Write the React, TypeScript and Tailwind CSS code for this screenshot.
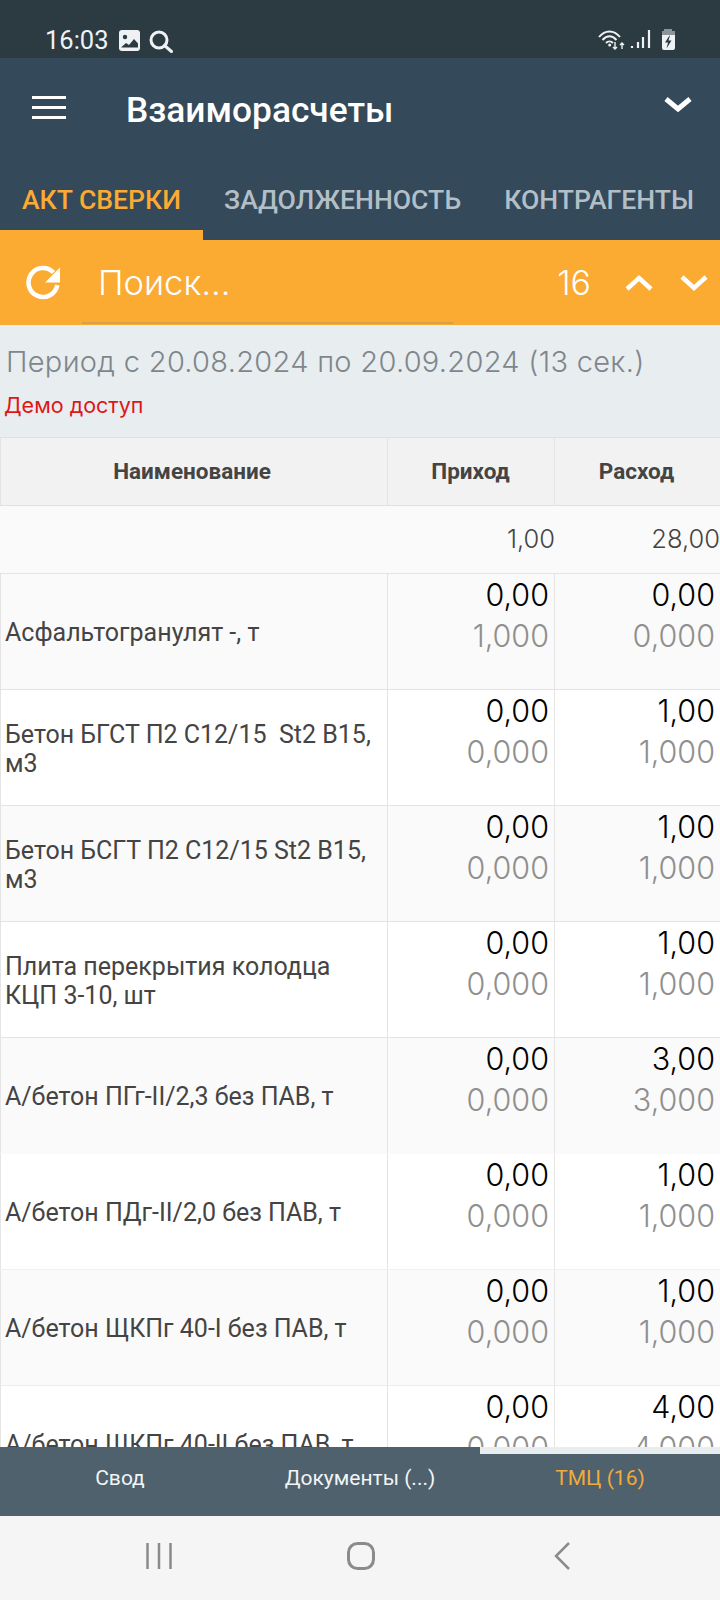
import React from 'react';

interface Row {
  name: string;
  inSum: string;
  inQty: string;
  outSum: string;
  outQty: string;
  border: string;
}

const rows: Row[] = [
  { name: 'Асфальтогранулят -, т', inSum: '0,00', inQty: '1,000', outSum: '0,00', outQty: '0,000', border: 'border-[#e4e4e4]' },
  { name: 'Бетон БГСТ П2 С12/15  St2 В15, м3', inSum: '0,00', inQty: '0,000', outSum: '1,00', outQty: '1,000', border: 'border-[#e4e4e4]' },
  { name: 'Бетон БСГТ П2 С12/15 St2 В15, м3', inSum: '0,00', inQty: '0,000', outSum: '1,00', outQty: '1,000', border: 'border-[#e4e4e4]' },
  { name: 'Плита перекрытия колодца КЦП 3-10, шт', inSum: '0,00', inQty: '0,000', outSum: '1,00', outQty: '1,000', border: 'border-[#e4e4e4]' },
  { name: 'А/бетон ПГг-II/2,3 без ПАВ, т', inSum: '0,00', inQty: '0,000', outSum: '3,00', outQty: '3,000', border: 'border-transparent' },
  { name: 'А/бетон ПДг-II/2,0 без ПАВ, т', inSum: '0,00', inQty: '0,000', outSum: '1,00', outQty: '1,000', border: 'border-[#f1f1f1]' },
  { name: 'А/бетон ЩКПг 40-I без ПАВ, т', inSum: '0,00', inQty: '0,000', outSum: '1,00', outQty: '1,000', border: 'border-[#ececec]' },
  { name: 'А/бетон ЩКПг 40-II без ПАВ, т', inSum: '0,00', inQty: '0,000', outSum: '4,00', outQty: '4,000', border: 'border-[#e4e4e4]' },
];

const numFont = "font-['Inter',sans-serif] font-light";

const StatusBar: React.FC = () => (
  <div className="flex h-[58px] shrink-0 items-end bg-[#2c3a42] pb-[4px] pl-[45px] pr-[42px] text-[#eef2f4]">
    <span className="font-['Roboto',sans-serif] text-[25.5px] leading-[28px]">16:03</span>
    <svg className="mb-[3px] ml-[10px]" width="21" height="21" viewBox="0 0 21 21">
      <rect width="21" height="21" rx="3" fill="#eef2f4" />
      <circle cx="6" cy="7" r="2.200" fill="#2c3a42" />
      <path d="M2 17.500l5-4.500 3 2 5-6 4 4.500v4z" fill="#2c3a42" />
    </svg>
    <svg className="mb-[1px] ml-[9px]" width="24" height="23" viewBox="0 0 24 23" fill="none" stroke="#eef2f4" strokeWidth="3">
      <circle cx="10" cy="10" r="8" />
      <path d="M15.500 15.500l7 6" strokeLinecap="round" />
    </svg>
    <svg className="mb-[3px] ml-auto" width="80" height="24" viewBox="0 -2 80 24" fill="none" stroke="#eef2f4">
      <path d="M1 8c6-7.500 15-7.500 21 0" strokeWidth="2" />
      <path d="M4.500 11c4.500-5 9.500-5 14 0" strokeWidth="2" />
      <path d="M8 14c2-2 5-2 7 0" strokeWidth="2" />
      <circle cx="11.700" cy="16" r="1.500" fill="#eef2f4" stroke="none" />
      <path d="M17 13v7m-2-2 2 2 2-2M24 20v-6m-2 2 2-2 2 2" strokeWidth="1.400" />
      <path d="M34 19v-2M40 19v-6M45 19V8M51 19V1" strokeWidth="2.200" />
      <path d="M66 0h8v2h3v4H64V2h2z" fill="#8a9499" stroke="none" />
      <path d="M64 6h13v13a2 2 0 0 1-2 2h-9a2 2 0 0 1-2-2z" fill="#eef2f4" stroke="none" />
      <path d="M71.500 6.500l-4.500 7h3l-1.500 6 5-8h-3l1.500-5z" fill="#2c3a42" stroke="none" />
    </svg>
  </div>
);

const Header: React.FC = () => (
  <div className="flex h-[182px] shrink-0 flex-col bg-[#34495a]">
    <div className="flex h-[100px] items-center pl-[32px] pr-[28px]">
      <div className="flex w-[34px] flex-col gap-[7px] pb-[2px]">
        <span className="h-[3px] bg-white" />
        <span className="h-[3px] bg-white" />
        <span className="h-[3px] bg-white" />
      </div>
      <span className="ml-[60px] pt-[4px] font-['Roboto',sans-serif] text-[35.3px] font-medium text-white">Взаиморасчеты</span>
      <svg className="mb-[6px] ml-auto" width="28" height="18" viewBox="0 0 28 18" fill="none" stroke="white" strokeWidth="5">
        <path d="M2 3l12 10L26 3" />
      </svg>
    </div>
    <div className="mt-auto flex h-[82px] font-['Roboto',sans-serif] text-[26.6px] font-medium">
      <div className="flex w-[203px] flex-col items-center">
        <span className="flex flex-1 items-center pt-[12px] text-[#fbaa32]">АКТ СВЕРКИ</span>
        <span className="h-[10px] w-full bg-[#fbaa32]" />
      </div>
      <span className="ml-[21px] flex h-[72px] items-center pt-[12px] text-[#b3bfc7]">ЗАДОЛЖЕННОСТЬ</span>
      <span className="ml-[43px] flex h-[72px] items-center pt-[12px] text-[#b3bfc7]">КОНТРАГЕНТЫ</span>
    </div>
  </div>
);

const SearchBar: React.FC = () => (
  <div className="relative flex h-[85px] shrink-0 items-center bg-[#fbaa32] pl-[26px] pr-[12px] text-white">
    <svg width="36" height="36" viewBox="0 0 36 36" fill="none" stroke="white" strokeWidth="4.500">
      <path d="M27.500 7.500A14.500 14.500 0 1 0 31.300 20" />
      <path d="M34 2.500v15H19z" fill="white" stroke="none" />
    </svg>
    <span className={`ml-[36px] text-[34.5px] ${numFont}`}>Поиск...</span>
    <span className={`ml-auto text-[34px] ${numFont}`}>16</span>
    <svg className="ml-[34px]" width="28" height="18" viewBox="0 0 28 18" fill="none" stroke="white" strokeWidth="4.500">
      <path d="M2 15L14 4l12 11" />
    </svg>
    <svg className="ml-[27px]" width="28" height="18" viewBox="0 0 28 18" fill="none" stroke="white" strokeWidth="4.500">
      <path d="M2 3l12 11L26 3" />
    </svg>
    <span className="absolute bottom-[1px] left-[82px] h-[2px] w-[371px] bg-[#d9a04c]" />
  </div>
);

const NumCell: React.FC<{ top: string; bottom: string; withBorder?: boolean }> = ({ top, bottom, withBorder }) => (
  <div className={`flex flex-col items-end pr-[5px] text-[30.5px] leading-[41px] ${numFont} ${withBorder ? 'border-r border-[#e4e4e4]' : ''}`}>
    <span className="text-black">{top}</span>
    <span className="text-[#8f8f8f]">{bottom}</span>
  </div>
);

const Table: React.FC = () => (
  <div className="min-h-0 flex-1 overflow-hidden bg-white">
    <div className="grid h-[69px] grid-cols-[388px_167px_165px] border-y border-[#e0e0e0] bg-[#f2f2f2] font-['Roboto',sans-serif] text-[22.5px] font-bold text-[#444444]">
      <div className="flex items-center justify-center border-x border-[#e4e4e4] pr-[4px]">Наименование</div>
      <div className="flex items-center justify-center border-r border-[#e4e4e4] pr-[1px]">Приход</div>
      <div className="flex items-center justify-center pr-[2px]">Расход</div>
    </div>
    <div className={`grid h-[68px] grid-cols-[388px_167px_165px] items-center border-b border-[#e4e4e4] bg-[#fafafa] pb-[1px] text-[25.5px] text-[#444444] ${numFont}`}>
      <div />
      <div className="text-right">1,00</div>
      <div className="text-right">28,00</div>
    </div>
    {rows.map((row, i) => (
      <div
        key={i}
        className={`grid h-[116px] grid-cols-[388px_167px_165px] border-b ${row.border} ${i % 2 === 0 ? 'bg-[#fafafa]' : 'bg-white'}`}
      >
        <div className="flex items-center whitespace-pre-wrap border-x border-[#e4e4e4] pl-[4px] pr-[10px] pt-[2px] font-['Roboto',sans-serif] text-[25px] leading-[29px] text-[#444444]">
          {row.name}
        </div>
        <NumCell top={row.inSum} bottom={row.inQty} withBorder />
        <NumCell top={row.outSum} bottom={row.outQty} />
      </div>
    ))}
  </div>
);

const BottomTabs: React.FC = () => (
  <div className="relative grid h-[69px] shrink-0 grid-cols-3 items-center bg-[#4f616d] pb-[6px] font-['Roboto',sans-serif] text-[21px]">
    <span className="absolute right-0 top-0 h-[7px] w-[240px] bg-[#e8edf0]" />
    <span className="text-center text-[#f2f4f5]">Свод</span>
    <span className="text-center text-[#f2f4f5]">Документы (...)</span>
    <span className="text-center text-[#f0ab3c]">ТМЦ (16)</span>
  </div>
);

const NavBar: React.FC = () => (
  <div className="flex h-[84px] shrink-0 items-center bg-[#f6f5f5] pb-[4px] pl-[146px]">
    <svg width="26" height="28" viewBox="0 0 26 28" stroke="#8b8b8b" strokeWidth="2.500">
      <path d="M1.500 1v26M13 1v26M24.500 1v26" />
    </svg>
    <svg className="ml-[175px]" width="28" height="28" viewBox="0 0 28 28" fill="none" stroke="#8b8b8b" strokeWidth="3">
      <rect x="1.500" y="1.500" width="25" height="25" rx="9" />
    </svg>
    <svg className="ml-[177px]" width="20" height="28" viewBox="0 0 20 28" fill="none" stroke="#8b8b8b" strokeWidth="2.500">
      <path d="M17 1L4 14l13 13" />
    </svg>
  </div>
);

export default function App() {
  return (
    <div className="flex h-[1600px] w-[720px] flex-col overflow-hidden bg-[#e8edf0]">
      <StatusBar />
      <Header />
      <SearchBar />
      <div className={`flex h-[112px] shrink-0 flex-col bg-[#e8edf0] pl-[6px] pt-[19px] ${numFont}`}>
        <span className="whitespace-nowrap text-[29px] leading-[36px] tracking-[0.3px] text-[#7f868b]">Период с 20.08.2024 по 20.09.2024 (13 сек.)</span>
        <span className="-ml-[2px] mt-[12px] text-[21.5px] leading-[26px] font-normal text-[#e01616]">Демо доступ</span>
      </div>
      <Table />
      <BottomTabs />
      <NavBar />
    </div>
  );
}
